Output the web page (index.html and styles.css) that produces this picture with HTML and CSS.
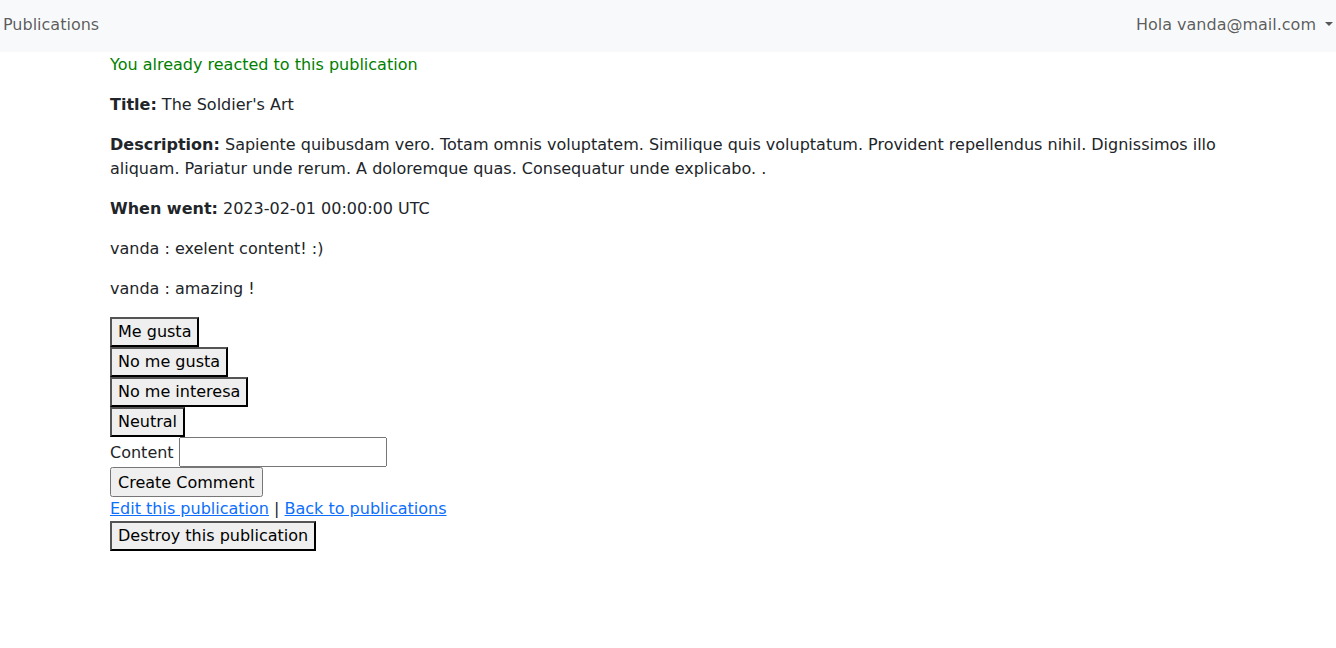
FILE: index.html
```html
<!DOCTYPE html>
<html lang="en">
<head>
<meta charset="utf-8">
<title>Publication</title>
<link rel="stylesheet" href="styles.css">
</head>
<body>
<nav class="navbar">
  <a class="brand" href="#">Publications</a>
  <a class="user-toggle" href="#">Hola vanda@mail.com</a>
</nav>
<main class="container">
  <p class="notice">You already reacted to this publication</p>
  <p><strong>Title:</strong> The Soldier's Art</p>
  <p><strong>Description:</strong> Sapiente quibusdam vero. Totam omnis voluptatem. Similique quis voluptatum. Provident repellendus nihil. Dignissimos illo aliquam. Pariatur unde rerum. A doloremque quas. Consequatur unde explicabo. .</p>
  <p><strong>When went:</strong> 2023-02-01 00:00:00 UTC</p>
  <p>vanda : exelent content! :)</p>
  <p>vanda : amazing !</p>
  <form class="btn-form"><button class="btn-plain" type="button">Me gusta</button></form>
  <form class="btn-form"><button class="btn-plain" type="button">No me gusta</button></form>
  <form class="btn-form"><button class="btn-plain" type="button">No me interesa</button></form>
  <form class="btn-form"><button class="btn-plain" type="button">Neutral</button></form>
  <form class="comment-form">
    <div class="field"><label class="field-label" for="content">Content</label> <input class="text-input" id="content" type="text"></div>
    <div><input class="submit-btn" type="button" value="Create Comment"></div>
  </form>
  <div class="links"><a href="#">Edit this publication</a> | <a href="#">Back to publications</a></div>
  <form class="btn-form"><button class="btn-plain" type="button">Destroy this publication</button></form>
</main>
</body>
</html>
```
FILE: styles.css
```css
* { box-sizing: border-box; }
body {
  margin: 0;
  font-family: "DejaVu Sans", sans-serif;
  font-size: 16px;
  line-height: 1.5;
  color: #212529;
  background: #fff;
}
.navbar {
  display: flex;
  justify-content: space-between;
  align-items: flex-start;
  height: 52px;
  padding: 13px 3px 0 3px;
  background: #f8f9fa;
}
.brand, .user-toggle {
  color: rgba(0, 0, 0, 0.65);
  text-decoration: none;
  line-height: 24px;
}
.user-toggle::after {
  content: "";
  display: inline-block;
  margin-left: 9px;
  vertical-align: 0.255em;
  border-top: 0.3em solid;
  border-right: 0.3em solid transparent;
  border-left: 0.3em solid transparent;
}
.container {
  max-width: 1140px;
  margin: 0 auto;
  padding: 1px 12px 0;
}
p { margin: 0 0 16px; }
strong { font-weight: bolder; }
.notice { color: green; }
.btn-form { margin: 0; }
.btn-plain {
  font: inherit;
  line-height: inherit;
  border-radius: 0;
  margin: 0;
  color: #000;
}
.comment-form { margin: 0; }
.field-label { display: inline-block; }
.text-input {
  font: inherit;
  line-height: inherit;
  margin: 0;
  width: 208px;
  height: 30px;
}
.submit-btn {
  font: inherit;
  margin: 0;
  height: 30px;
  padding: 1px 6px;
  color: #000;
}
a { color: #0d6efd; }
```
